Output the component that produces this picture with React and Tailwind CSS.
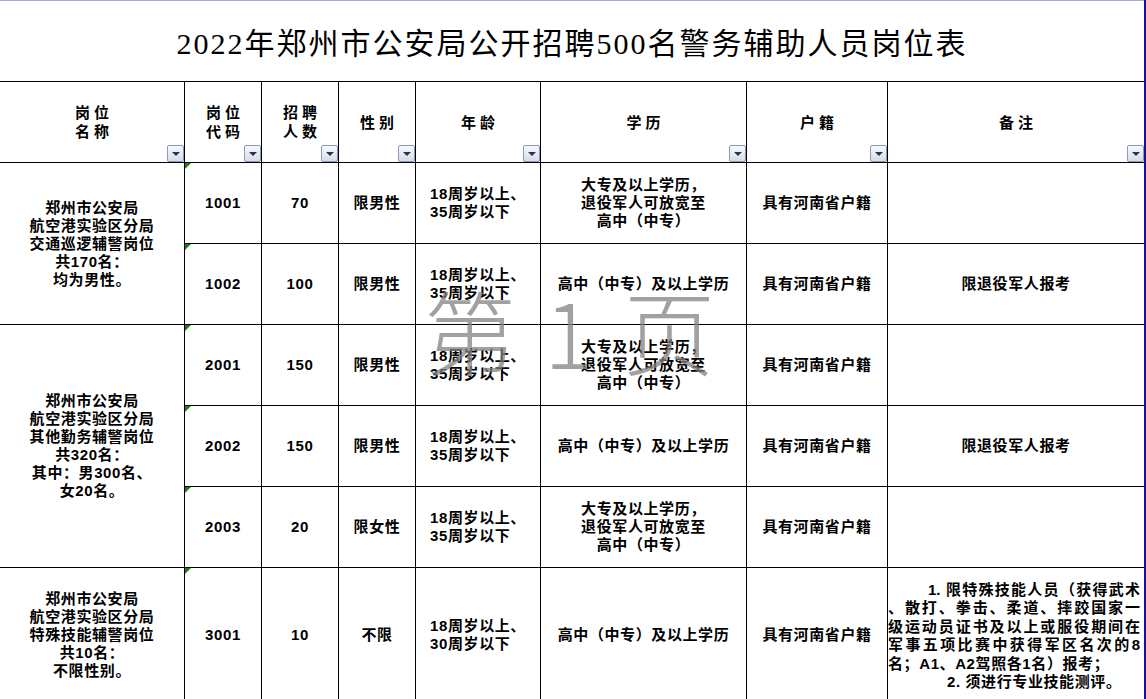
import React from 'react';

const FONT = { fontFamily: '"Liberation Sans", "Noto Sans CJK SC", sans-serif' };

function Filter() {
  return (
    <div className="absolute bottom-0 right-0 flex h-[17px] w-[17px] items-center justify-center rounded-[2px] border border-[#8a9ab8] bg-linear-to-b from-[#f8f9fc] to-[#d6dce8]">
      <div className="h-0 w-0 border-x-[4px] border-t-[4px] border-x-transparent border-t-[#27305c]" />
    </div>
  );
}

function Head({ lines }) {
  return (
    <div className="relative flex items-center justify-center bg-white text-center">
      <div className="pl-[4px] tracking-[4px] leading-[19px]">
        {lines.map((l) => (
          <div key={l}>{l}</div>
        ))}
      </div>
      <Filter />
    </div>
  );
}

function Cell({ lines, mark, className = '' }) {
  return (
    <div className={`relative flex items-center justify-center bg-white text-center leading-[18px] ${className}`}>
      {mark && (
        <div className="absolute left-0 top-0 h-0 w-0 border-r-[6px] border-t-[6px] border-r-transparent border-t-[#1c7d1c]" />
      )}
      <div>
        {lines.map((l, i) => (
          <div key={i} className="whitespace-nowrap">{l}</div>
        ))}
      </div>
    </div>
  );
}

function Age({ max }) {
  return (
    <div className="flex items-center justify-center bg-white leading-[18px]">
      <div className="text-left">
        <div>18周岁以上、</div>
        <div>{max}周岁以下</div>
      </div>
    </div>
  );
}

const DAZHUAN = ['大专及以上学历，', '退役军人可放宽至', '高中（中专）'];
const GAOZHONG = ['高中（中专）及以上学历'];
const HUJI = ['具有河南省户籍'];

function Row({ code, num, sex, max = 35, edu, note }) {
  return (
    <>
      <Cell mark lines={[code]} />
      <Cell lines={[num]} />
      <Cell lines={[sex]} />
      <Age max={max} />
      <Cell lines={edu} />
      <Cell lines={HUJI} />
      <Cell lines={note ? [note] : []} />
    </>
  );
}

export default function App() {
  return (
    <div className="relative flex h-[699px] w-[1146px] overflow-hidden bg-white text-[15px] font-bold tracking-[0.6px] text-black" style={FONT}>
      <div className="w-[1144px] shrink-0">
        <div className="h-px bg-[#a3afd8]" />
        <div className="grid grid-cols-[184px_76px_76px_76px_124px_205px_140px_256px] grid-rows-[80px_80px_80px_80px_80px_80px_80px_134px] gap-px bg-black">
          <div
            className="col-span-8 flex items-center justify-center bg-white pt-[5px] text-[30px] font-normal tracking-[2px]"
            style={{ fontFamily: '"Liberation Serif", "Noto Sans CJK SC", serif' }}
          >
            2022年郑州市公安局公开招聘500名警务辅助人员岗位表
          </div>

          <Head lines={['岗位', '名称']} />
          <Head lines={['岗位', '代码']} />
          <Head lines={['招聘', '人数']} />
          <Head lines={['性别']} />
          <Head lines={['年龄']} />
          <Head lines={['学历']} />
          <Head lines={['户籍']} />
          <Head lines={['备注']} />

          <Cell className="row-span-2" lines={['郑州市公安局', '航空港实验区分局', '交通巡逻辅警岗位', '共170名：', '均为男性。']} />
          <Row code="1001" num="70" sex="限男性" edu={DAZHUAN} />
          <Row code="1002" num="100" sex="限男性" edu={GAOZHONG} note="限退役军人报考" />

          <Cell className="row-span-3" lines={['郑州市公安局', '航空港实验区分局', '其他勤务辅警岗位', '共320名：', '其中：男300名、', '女20名。']} />
          <Row code="2001" num="150" sex="限男性" edu={DAZHUAN} />
          <Row code="2002" num="150" sex="限男性" edu={GAOZHONG} note="限退役军人报考" />
          <Row code="2003" num="20" sex="限女性" edu={DAZHUAN} />

          <Cell lines={['郑州市公安局', '航空港实验区分局', '特殊技能辅警岗位', '共10名：', '不限性别。']} />
          <Cell mark lines={['3001']} />
          <Cell lines={['10']} />
          <Cell lines={['不限']} />
          <Age max={30} />
          <Cell lines={GAOZHONG} />
          <Cell lines={HUJI} />
          <div className="flex flex-col justify-center overflow-hidden bg-white pr-[4px] pt-[2px] leading-[18.5px] tracking-normal">
            <div className="whitespace-nowrap pl-[40px] text-justify [text-align-last:justify]">1. 限特殊技能人员（获得武术</div>
            <div className="whitespace-nowrap text-justify [text-align-last:justify]">、散打、拳击、柔道、摔跤国家一</div>
            <div className="whitespace-nowrap text-justify [text-align-last:justify]">级运动员证书及以上或服役期间在</div>
            <div className="whitespace-nowrap text-justify [text-align-last:justify]">军事五项比赛中获得军区名次的8</div>
            <div className="whitespace-nowrap tracking-[0.6px]">名；A1、A2驾照各1名）报考；</div>
            <div className="whitespace-nowrap pl-[59px] tracking-[0.6px]">2. 须进行专业技能测评。</div>
          </div>
        </div>
      </div>
      <div className="h-full w-[2px] shrink-0 bg-[#1212a6]" />

      <div
        className="pointer-events-none absolute left-[424px] top-[283px] flex whitespace-nowrap text-[92px] font-light leading-none tracking-normal text-[rgba(130,130,130,0.75)]"
        style={{ fontFamily: '"Noto Sans CJK SC", sans-serif' }}
      >
        <span>第</span>
        <span className="ml-[28px]">1</span>
        <span className="ml-[30px]">页</span>
      </div>
    </div>
  );
}
